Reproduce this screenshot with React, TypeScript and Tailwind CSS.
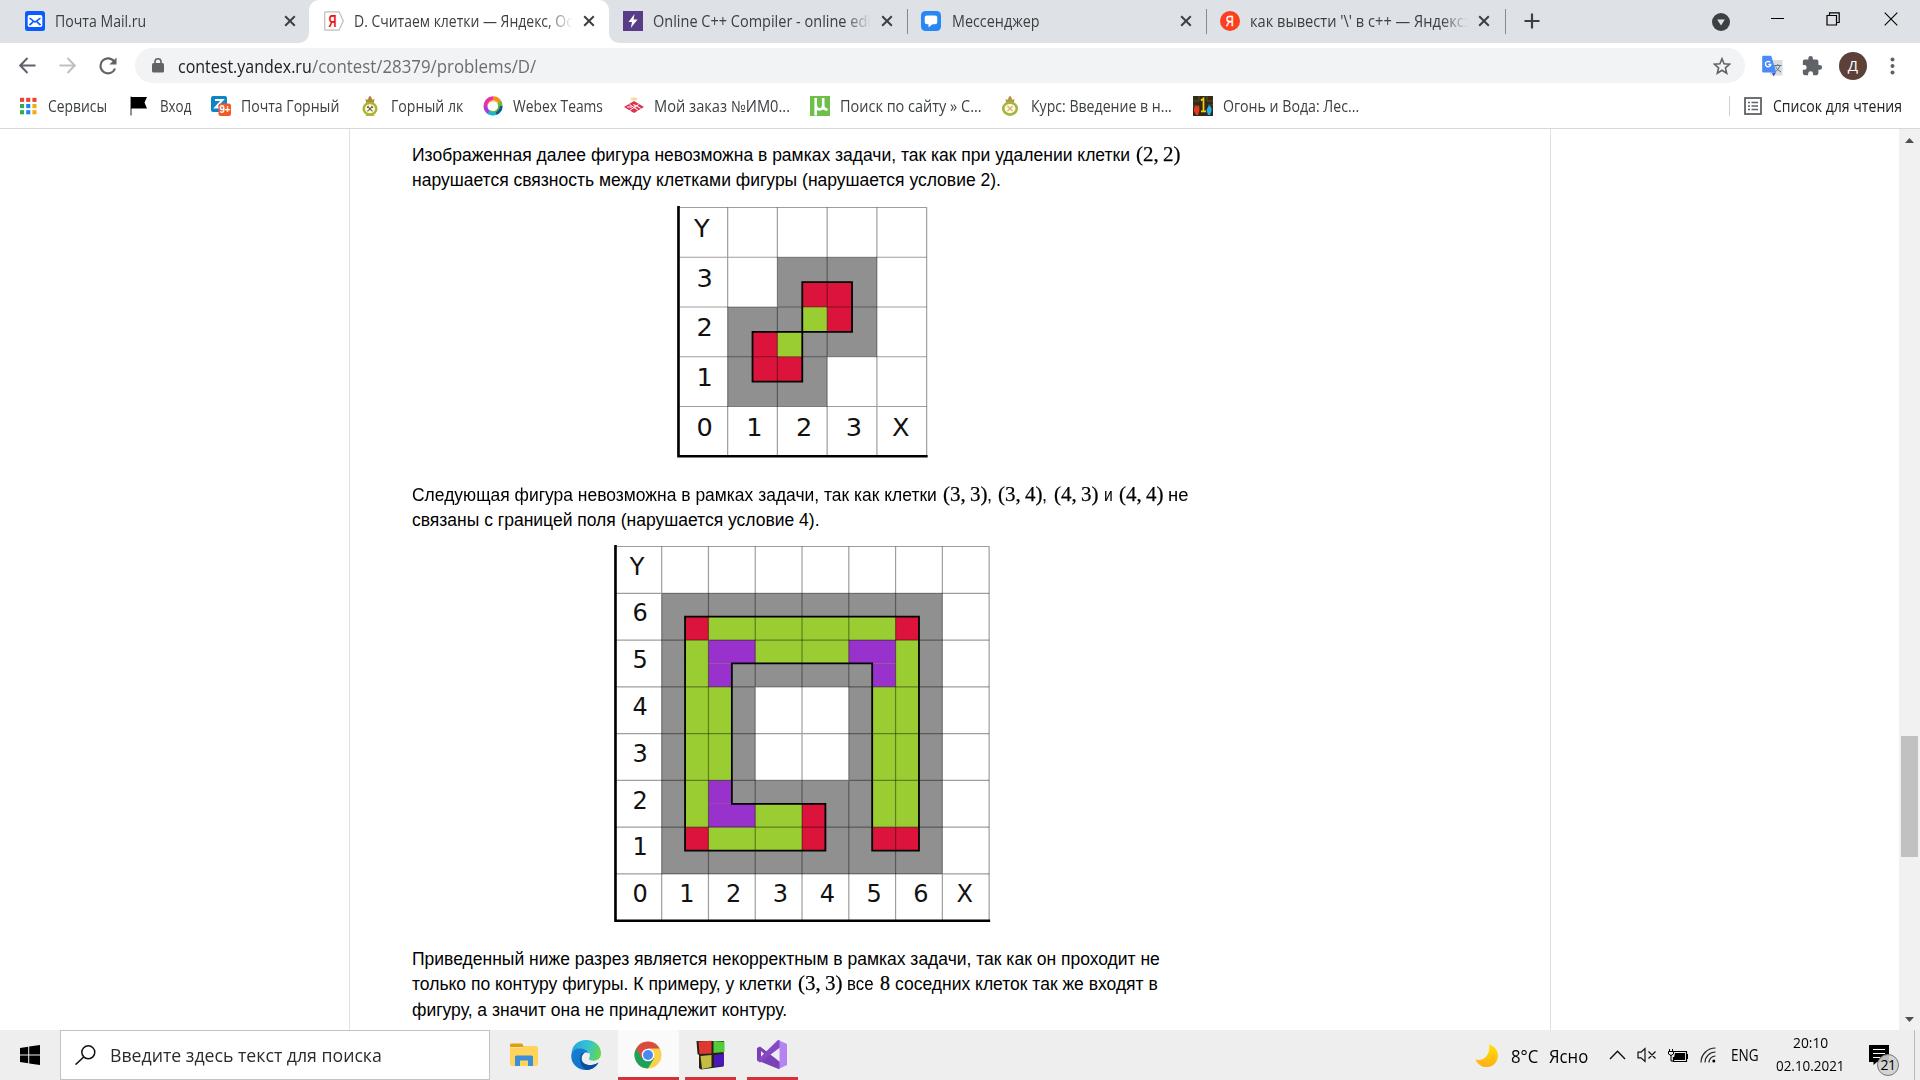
import { useLayoutEffect, useRef, useState, type ReactNode } from "react";

/** Single-line text condensed or widened to an exact width. */
function Fit({ w, className = "", children }: { w: number; className?: string; children: ReactNode }) {
  const ref = useRef<HTMLSpanElement>(null);
  const [scale, setScale] = useState(1);
  useLayoutEffect(() => {
    if (ref.current) setScale(w / ref.current.offsetWidth);
  }, [w]);
  return (
    <span className={`inline-block shrink-0 whitespace-nowrap ${className}`} style={{ width: w }}>
      <span ref={ref} className="inline-block origin-left whitespace-nowrap" style={{ transform: `scaleX(${scale})` }}>
        {children}
      </span>
    </span>
  );
}

function CloseX() {
  return (
    <svg className="h-[12px] w-[12px] shrink-0" viewBox="0 0 12 12" stroke="#3c4043" strokeWidth="2" fill="none">
      <path d="M1.2 1.2 10.8 10.8M10.8 1.2 1.2 10.8" />
    </svg>
  );
}

const MailIcon = () => (
  <svg className="h-5 w-5 shrink-0" viewBox="0 0 20 20">
    <rect width="20" height="20" rx="2.5" fill="#0a5cff" />
    <rect x="2.7" y="4" width="14.6" height="12" rx="1.8" fill="#fff" />
    <path d="M4.5 14.2 8 10.8M15.5 14.2 12 10.8M4.5 7.2C7 8 8 10.9 10 10.9S13 8 15.5 7.2" stroke="#0a5cff" strokeWidth="1.7" fill="none" />
  </svg>
);
const YaTabIcon = () => (
  <svg className="h-5 w-5 shrink-0" viewBox="0 0 20 20">
    <path d="M1.5.8H15L19.3 10 15 19.2H1.5Q.7 19.2.7 18.4V1.6Q.7.8 1.5.8Z" fill="#fff" stroke="#bdbdbd" strokeWidth="1.2" />
    <text x="4.6" y="15.6" fontFamily="Liberation Sans" fontWeight="bold" fontSize="16" textLength="8" lengthAdjust="spacingAndGlyphs" fill="#e11">Я</text>
  </svg>
);
const BoltIcon = () => (
  <svg className="h-5 w-5 shrink-0" viewBox="0 0 20 20">
    <rect width="20" height="20" fill="#583c87" />
    <path d="M11.5 3 5.5 11H9L7.8 17 14.6 8.6H10.6Z" fill="#fff" />
  </svg>
);
const ChatIcon = () => (
  <svg className="h-5 w-5 shrink-0" viewBox="0 0 20 20">
    <rect width="20" height="20" rx="4.5" fill="#2787f5" />
    <path d="M6 4.5H14Q16.3 4.5 16.3 6.8V11Q16.3 13.3 14 13.3H11.5L7.5 16.5V13.3H6Q3.7 13.3 3.7 11V6.8Q3.7 4.5 6 4.5Z" fill="#fff" />
  </svg>
);
const YaRoundIcon = () => (
  <svg className="h-5 w-5 shrink-0" viewBox="0 0 20 20">
    <circle cx="10" cy="10" r="10" fill="#fc3f1d" />
    <text x="5.8" y="15.4" fontFamily="Liberation Sans" fontSize="15" textLength="8" lengthAdjust="spacingAndGlyphs" fill="#fff" stroke="#fff" strokeWidth=".4">Я</text>
  </svg>
);

const FADE = "[mask-image:linear-gradient(to_right,#000_88%,transparent)]";

function TabStrip() {
  return (
    <div className="flex h-[43px] shrink-0 items-center bg-[#dee1e6] text-[15.5px] leading-[22px] text-[#3c4043]">
      <div className="flex h-full w-[309px] shrink-0 items-center bg-white">
        <div className="flex h-full w-full items-center rounded-br-[10px] bg-[#dee1e6] pb-px pl-[25px]">
          <MailIcon />
          <Fit w={91} className="ml-[10px]">Почта Mail.ru</Fit>
          <div className="ml-[138px]"><CloseX /></div>
        </div>
      </div>
      <div className="h-full w-[300px] shrink-0 bg-[#dee1e6]">
        <div className="flex h-full items-center rounded-t-[10px] bg-white pb-px pl-[15px]">
          <YaTabIcon />
          <div className={`ml-[10px] w-[219px] ${FADE}`}><Fit w={219}>D. Считаем клетки — Яндекс, Ос</Fit></div>
          <div className="ml-[10px]"><CloseX /></div>
        </div>
      </div>
      <div className="h-full w-[298px] shrink-0 bg-white">
        <div className="flex h-full items-center rounded-bl-[10px] bg-[#dee1e6] pb-px pl-[14px]">
          <BoltIcon />
          <div className={`ml-[10px] w-[218px] ${FADE}`}><Fit w={218}>Online C++ Compiler - online edi</Fit></div>
          <div className="ml-[10px]"><CloseX /></div>
        </div>
      </div>
      <div className="h-[25px] w-px bg-[#85888c]" />
      <div className="flex w-[298px] shrink-0 items-center pb-px pl-[13px]">
        <ChatIcon />
        <Fit w={88} className="ml-[11px]">Мессенджер</Fit>
        <div className="ml-[140px]"><CloseX /></div>
      </div>
      <div className="h-[25px] w-px bg-[#85888c]" />
      <div className="flex w-[298px] shrink-0 items-center pb-px pl-[13px]">
        <YaRoundIcon />
        <div className={`ml-[10px] w-[218px] ${FADE}`}><Fit w={218}>как вывести '\' в c++ — Яндекс:</Fit></div>
        <div className="ml-[10px]"><CloseX /></div>
      </div>
      <div className="h-[25px] w-px bg-[#85888c]" />
      <svg className="mb-px ml-[18px] h-4 w-4 shrink-0" viewBox="0 0 16 16" stroke="#3c4043" strokeWidth="2.2"><path d="M8 .5V15.5M.5 8H15.5" /></svg>
      <svg className="ml-[172px] h-[18px] w-[18px] shrink-0" viewBox="0 0 18 18"><circle cx="9" cy="9" r="9" fill="#3c4043" /><path d="M5.2 6.5H12.8L9 12.5Z" fill="#dee1e6" /></svg>
      <div className="mb-[7px] ml-[41px] h-[1px] w-[13px] shrink-0 bg-black" />
      <svg className="mb-[6px] ml-[42px] h-[14px] w-[14px] shrink-0" viewBox="0 0 14 14" fill="none" stroke="#000" strokeWidth="1.2"><path d="M1 3.5H10.5V13H1ZM3.5 3.5V.8H13.2V10.5H10.5" /></svg>
      <svg className="mb-[6px] ml-[44px] h-[14px] w-[14px] shrink-0" viewBox="0 0 14 14" stroke="#000" strokeWidth="1.1"><path d="M.7.7 13.3 13.3M13.3.7.7 13.3" /></svg>
    </div>
  );
}

function Toolbar() {
  return (
    <div className="flex h-[45px] shrink-0 items-center bg-white text-[#5f6368]">
      <svg className="ml-[19px] h-[17px] w-[17px] shrink-0" viewBox="0 0 17 17" fill="none" stroke="#5f6368" strokeWidth="2"><path d="M16.5 8.5H1.5M8.5 1 1.2 8.5 8.5 16" /></svg>
      <svg className="ml-[23px] h-[17px] w-[17px] shrink-0" viewBox="0 0 17 17" fill="none" stroke="#bdc1c6" strokeWidth="2"><path d="M.5 8.5H15.5M8.5 1 15.8 8.5 8.5 16" /></svg>
      <svg className="ml-[23px] h-[18px] w-[18px] shrink-0" viewBox="0 0 18 18" fill="none" stroke="#5f6368" strokeWidth="2.1"><path d="M15.3 4.8A7.5 7.5 0 1 0 16 11.5" /><path d="M17.5.5V7.6H10.4Z" fill="#5f6368" stroke="none" /></svg>
      <div className="ml-[18px] flex h-[35px] w-[1610px] shrink-0 items-center rounded-full bg-[#f1f3f4] text-[18.5px] leading-[26px]">
        <svg className="ml-[17px] h-[15px] w-[12px] shrink-0" viewBox="0 0 12 15"><rect y="5" width="12" height="9.6" rx="1.5" fill="#5f6368" /><path d="M3 6V3.8A3 3 0 0 1 9 3.8V6" fill="none" stroke="#5f6368" strokeWidth="1.6" /></svg>
        <Fit w={134} className="ml-[14px] text-[#202124]">contest.yandex.ru</Fit>
        <Fit w={224} className="text-[#6a6e73]">/contest/28379/problems/D/</Fit>
        <svg className="ml-[1177px] h-[18px] w-[18px] shrink-0" viewBox="0 0 20 20" fill="none" stroke="#5f6368" strokeWidth="1.8"><path d="M10 2 12.3 7.6 18.4 8.1 13.8 12.1 15.2 18 10 14.8 4.8 18 6.2 12.1 1.6 8.1 7.7 7.6Z" /></svg>
      </div>
      <svg className="ml-[17px] h-[22px] w-[21px] shrink-0" viewBox="0 0 21 22">
        <rect x="8" y="5" width="12.5" height="15.5" rx="1" fill="#dcdcdc" />
        <path d="M12 10.5H19.5M15.7 9V10.5M18 10.5Q17 14.5 13 17M13.5 11.5Q15 15 19 17" stroke="#607988" fill="none" />
        <path d="M10 17.5H14L11.5 21.5Z" fill="#3a52c4" />
        <path d="M1.2.7H9.2L14.3 17.5H1.2Q.2 17.5.2 16.5V1.7Q.2.7 1.2.7Z" fill="#4a8af4" />
        <path d="M8.2 7.3A2.7 2.7 0 1 0 8.8 9.4H6.3" fill="none" stroke="#fff" strokeWidth="1.4" />
      </svg>
      <svg className="ml-[18px] h-[22px] w-[22px] shrink-0" viewBox="0 0 24 24" fill="#5f6368"><path d="M20.5 11H19V7a2 2 0 0 0-2-2h-4V3.5a2.5 2.5 0 0 0-5 0V5H4a2 2 0 0 0-2 2v3.8h1.5a2.7 2.7 0 0 1 0 5.4H2V20a2 2 0 0 0 2 2h3.8v-1.5a2.7 2.7 0 0 1 5.4 0V22H17a2 2 0 0 0 2-2v-4h1.5a2.5 2.5 0 0 0 0-5z" /></svg>
      <div className="ml-[16px] flex h-7 w-7 shrink-0 items-center justify-center rounded-full bg-[#5d4037] text-[15px] leading-none text-white">Д</div>
      <svg className="ml-[23px] h-[18px] w-[5px] shrink-0" viewBox="0 0 5 18" fill="#5f6368"><circle cx="2.5" cy="2.5" r="2" /><circle cx="2.5" cy="9" r="2" /><circle cx="2.5" cy="15.5" r="2" /></svg>
    </div>
  );
}

const APP_DOTS = ["#ea4335", "#ea4335", "#ea4335", "#34a853", "#1a85f0", "#fbab05", "#34a853", "#1a85f0", "#fbab05"];
const AppsIcon = () => (
  <svg className="h-5 w-5" viewBox="0 0 20 20">
    {APP_DOTS.map((c, i) => <rect key={i} x={2 + (i % 3) * 6.2} y={1.8 + Math.floor(i / 3) * 6.2} width="4.1" height="4.1" fill={c} />)}
  </svg>
);
const FlagIcon = () => (
  <svg className="h-5 w-5" viewBox="0 0 20 20"><path d="M1 .5V19.5" stroke="#222" /><path d="M1 1H17L14.5 6.5 17 12.5H1Z" fill="#000" /></svg>
);
const ZimbraIcon = () => (
  <svg className="h-5 w-5" viewBox="0 0 20 20">
    <rect width="16" height="16" rx="2" fill="#0d86c8" />
    <path d="M4 4H11.5L4.5 11.5H12" fill="none" stroke="#fff" strokeWidth="2" />
    <rect x="7.5" y="7.5" width="12.5" height="12.5" rx="2" fill="#f1592a" />
    <text x="8.5" y="17" fontSize="10" fontWeight="bold" fontFamily="Liberation Sans" fill="#fff" textLength="11" lengthAdjust="spacingAndGlyphs">9+</text>
  </svg>
);
const CrestIcon = () => (
  <svg className="h-5 w-5" viewBox="0 0 20 20">
    <path d="M4.500 3 6.500 3.800 8 1.500H10L11.500 3.800 13.500 3 12.800 7H5.200Z" fill="#b28a3f" />
    <circle cx="9" cy="1.500" r="1.300" fill="#a87b38" />
    <ellipse cx="9" cy="12.800" rx="6.300" ry="5.800" fill="#fbf9e6" stroke="#a9b62c" strokeWidth="2.500" />
    <path d="M5 19Q9 20.500 13 19" stroke="#c4ae3a" strokeWidth="1.600" fill="none" />
    <path d="M6.800 10.600 11.600 15.400M11.200 10.600 6.400 15.400M6 11.600 7.600 10M12 11.600 10.400 10" stroke="#6d6540" strokeWidth="1.100" />
  </svg>
);
const GoldCrestIcon = () => (
  <svg className="h-5 w-5" viewBox="0 0 20 20">
    <path d="M4.500 3 6.500 3.800 8 1.500H10L11.500 3.800 13.500 3 12.800 7H5.200Z" fill="#b9954a" />
    <circle cx="9" cy="1.500" r="1.300" fill="#b08a40" />
    <ellipse cx="9" cy="12.600" rx="6.800" ry="6" fill="#fffbe2" stroke="#a3b542" strokeWidth="2.600" />
    <path d="M6.400 10 11.600 15.200M11.600 10 6.400 15.200" stroke="#d5b25f" strokeWidth="1.200" />
  </svg>
);
const WebexIcon = () => (
  <svg className="h-5 w-5" viewBox="0 0 20 20" fill="none" strokeWidth="4">
    <path d="M10 2.300A7.600 7.600 0 0 0 2.500 10" stroke="#ed2ea5" />
    <path d="M2.500 10A7.600 7.600 0 0 0 7 16.900" stroke="#a63ddc" />
    <path d="M5.500 16.200A7.600 7.600 0 0 0 15 15.700" stroke="#12b5e0" />
    <path d="M10 2.300A7.600 7.600 0 0 1 16.800 6.400" stroke="#f58f1c" />
    <path d="M16.600 6A7.600 7.600 0 0 1 17.600 10" stroke="#68bb38" />
    <path d="M17.600 10A7.600 7.600 0 0 1 13 17" stroke="#14548e" />
    <path d="M5 8A5.500 5.500 0 0 1 15 8" stroke="#f7ba35" strokeWidth="1" />
    <path d="M15.500 8A5.800 5.800 0 0 1 7 15" stroke="#55ba45" strokeWidth="1.600" />
  </svg>
);
const DiamondIcon = () => (
  <svg className="h-5 w-5" viewBox="0 0 20 20">
    <path d="M10 .5 11 2 13.500 1.500 12.500 4.500H7.500L6.500 1.500 9 2Z" fill="#f1dca4" />
    <path d="M10 5 20 11 10 17 0 11Z" fill="#dc3450" />
    <path d="M5.500 8.500 14.500 14.500M14.500 8.500 5.500 14.500M3.200 11H8M12 9.500 16.800 12.500" stroke="#fff" strokeWidth="1" />
    <path d="M9 8 14 9.500 11 12Z" fill="#fbdce0" />
  </svg>
);
const MuIcon = () => (
  <svg className="h-5 w-5" viewBox="0 0 20 20">
    <rect width="20" height="20" fill="#6cc04a" />
    <path d="M5.700 2V19.600M5.700 8Q5.700 13.400 9.400 13.400 13.200 13.400 13.200 9V2M13.200 9Q13.200 13.600 17.500 13.600" stroke="#fff" strokeWidth="2.600" fill="none" />
  </svg>
);
const GameIcon = () => (
  <svg className="h-5 w-5" viewBox="0 0 20 20">
    <rect width="20" height="20" fill="#332b17" />
    <path d="M0 5H6V0M14 0V5H20M0 10H5M15 9H20" stroke="#5c4c26" fill="none" />
    <path d="M8 4.500 10.500 2.500V15M8 15.300H13" stroke="#f5d10c" strokeWidth="1.700" fill="none" />
    <path d="M1 12 3 9 4 11 6 9 6.500 14 5 19H3L1 15Z" fill="#e8391b" />
    <path d="M16 9 18.500 12V15L17 19H15L13.500 14Z" fill="#1fb4ec" />
  </svg>
);

const BOOKMARKS = [
  { box: "w-[112px]", icon: <AppsIcon />, label: "Сервисы", w: 59 },
  { box: "w-[81px]", icon: <FlagIcon />, label: "Вход", w: 31 },
  { box: "w-[150px]", icon: <ZimbraIcon />, label: "Почта Горный", w: 98 },
  { box: "w-[122px]", icon: <CrestIcon />, label: "Горный лк", w: 72 },
  { box: "w-[141px]", icon: <WebexIcon />, label: "Webex Teams", w: 90 },
  { box: "w-[186px]", icon: <DiamondIcon />, label: "Мой заказ №ИМ0...", w: 136 },
  { box: "w-[191px]", icon: <MuIcon />, label: "Поиск по сайту » С...", w: 142 },
  { box: "w-[192px]", icon: <GoldCrestIcon />, label: "Курс: Введение в н...", w: 141 },
  { box: "w-[200px]", icon: <GameIcon />, label: "Огонь и Вода: Лес...", w: 136 },
];

function Bookmarks() {
  return (
    <div className="flex h-[41px] shrink-0 items-center border-b border-[#d5d7da] bg-white pb-[4px] pl-[18px] text-[15.5px] leading-[22px] text-[#3c4043]">
      {BOOKMARKS.map((b) => (
        <div key={b.label} className={`flex shrink-0 items-center gap-[9.5px] ${b.box}`}>
          <div className="h-5 w-5 shrink-0">{b.icon}</div>
          <Fit w={b.w}>{b.label}</Fit>
        </div>
      ))}
      <div className="ml-auto flex items-center pr-[18px]">
        <div className="h-5 w-px bg-[#cfd1d4]" />
        <svg className="ml-[14px] h-[18px] w-[18px]" viewBox="0 0 18 18" fill="none" stroke="#5f6368" strokeWidth="1.8">
          <rect x="1" y="1" width="16" height="16" />
          <path d="M4 5.500H6M7.500 5.500H14M4 9H6M7.500 9H14M4 12.500H6M7.500 12.500H14" strokeWidth="1.500" />
        </svg>
        <Fit w={129} className="ml-[11px] text-[#202124]">Список для чтения</Fit>
      </div>
    </div>
  );
}

type Box = [number, number, number, number, string];
const GREY = "#909090", RED = "#dc143c", GREEN = "#9acd32", PURPLE = "#9932cc";

/** Coordinate board: blocks and outlines are given in cell units from the top-left corner. */
function Board({ n, cell, width, font, lift, blocks, outlines, className }: {
  n: number; cell: number; width: number; font: number; lift: number; blocks: Box[]; outlines: string[]; className: string;
}) {
  const o = 0.9;
  const top = 2.5;
  const at = (v: number) => v * cell;
  const path = (s: string) => s.split(" ").map((p, i) => {
    const [x, y] = p.split(",").map(Number);
    return `${i ? "L" : "M"}${o + at(x)} ${top + at(y)}`;
  }).join("") + "Z";
  const lines = Array.from({ length: n + 1 }, (_, i) => i);
  const end = at(n);
  const side = cell * 0.54;
  const base = cell * 0.61 - lift;
  return (
    <svg className={`shrink-0 ${className}`} viewBox={`0 0 ${width} ${width}`} fontFamily="DejaVu Sans" fontSize={font} textAnchor="middle" fill="#111">
      {blocks.map(([x, y, w, h, c], i) => <rect key={i} x={o + at(x)} y={top + at(y)} width={at(w)} height={at(h)} fill={c} />)}
      {lines.map((i) => (
        <path key={i} d={`M${o + at(i)} ${top}V${top + end}M${o} ${top + at(i)}H${o + end}`} stroke="#000" strokeOpacity=".38" strokeWidth="1.2" />
      ))}
      {outlines.map((s) => <path key={s} d={path(s)} fill="none" stroke="#000" strokeWidth="1.8" />)}
      <path d={`M1.500 1V${top + end}H${o + end + 1}`} fill="none" stroke="#000" strokeWidth="2.6" />
      <text x={o + side - 3} y={top + base}>Y</text>
      {Array.from({ length: n - 1 }, (_, i) => (
        <text key={i} x={o + side} y={top + at(i + 1) + base}>{n - 2 - i}</text>
      ))}
      {Array.from({ length: n - 2 }, (_, i) => (
        <text key={i} x={o + at(i + 1) + side} y={top + at(n - 1) + base}>{i + 1}</text>
      ))}
      <text x={o + at(n - 1) + side - 3} y={top + at(n - 1) + base}>X</text>
    </svg>
  );
}

const FIRST: Box[] = [
  [2, 1, 2, 2, GREY], [1, 2, 2, 2, GREY],
  [2.5, 1.5, 1, 1, RED], [2.5, 2, 0.5, 0.5, GREEN],
  [1.5, 2.5, 1, 1, RED], [2, 2.5, 0.5, 0.5, GREEN],
];
const SECOND: Box[] = [
  [1, 1, 6, 6, GREY], [3, 3, 2, 2, "#fff"],
  [1.5, 1.5, 5, 1, GREEN], [1.5, 1.5, 1, 5, GREEN], [5.5, 1.5, 1, 5, GREEN], [2, 5.5, 2, 1, GREEN],
  [1.5, 1.5, 0.5, 0.5, RED], [6, 1.5, 0.5, 0.5, RED], [1.5, 6, 0.5, 0.5, RED], [4, 5.5, 0.5, 1, RED], [5.5, 6, 1, 0.5, RED],
  [2, 2, 1, 0.5, PURPLE], [2, 2.5, 0.5, 0.5, PURPLE], [5, 2, 1, 0.5, PURPLE], [5.5, 2.5, 0.5, 0.5, PURPLE],
  [2, 5, 0.5, 0.5, PURPLE], [2, 5.5, 1, 0.5, PURPLE],
];

const Tex = ({ w, className = "", children }: { w: number; className?: string; children: ReactNode }) => (
  <Fit w={w} className={`font-['Liberation_Serif'] text-[20px] leading-[20px] [-webkit-text-stroke:0.25px_#000] ${className}`}>{children}</Fit>
);
const Pair = ({ a, b, w, className = "" }: { a: number; b: number; w: number; className?: string }) => (
  <Tex w={w} className={className}>({a},{"\u2009"}{b})</Tex>
);
const Line = ({ children }: { children: ReactNode }) => <div className="flex h-[25.3px] items-baseline leading-[25px]">{children}</div>;

function Problem() {
  return (
    <div className="flex min-h-0 flex-1 bg-white">
      <div className="w-[349px] shrink-0" />
      <div className="flex w-[1202px] shrink-0 flex-col border-x border-[#e0e0e0] pl-[62px] pt-[14px] font-['Liberation_Sans'] text-[17.5px] text-black">
        <Line><Fit w={718}>Изображенная далее фигура невозможна в рамках задачи, так как при удалении клетки</Fit><Pair a={2} b={2} w={44} className="ml-[6px]" /></Line>
        <Line><Fit w={589}>нарушается связность между клетками фигуры (нарушается условие 2).</Fit></Line>
        <Board n={5} cell={49.75} width={254} font={25.6} lift={1} blocks={FIRST} outlines={["2.5,1.5 3.5,1.5 3.5,2.5 2.5,2.5", "1.5,2.5 2.5,2.5 2.5,3.5 1.5,3.5"]} className="ml-[265px] mt-[11px] h-[254px] w-[254px]" />
        <div className="h-[24px] shrink-0" />
        <Line>
          <Fit w={525}>Следующая фигура невозможна в рамках задачи, так как клетки</Fit>
          <Pair a={3} b={3} w={44} className="ml-[6px]" /><span>,</span>
          <Pair a={3} b={4} w={44} className="ml-[6px]" /><span>,</span>
          <Pair a={4} b={3} w={44} className="ml-[7px]" />
          <Fit w={9} className="ml-[6px]">и</Fit>
          <Pair a={4} b={4} w={44} className="ml-[6px]" />
          <Fit w={20} className="ml-[5px]">не</Fit>
        </Line>
        <Line><Fit w={408}>связаны с границей поля (нарушается условие 4).</Fit></Line>
        <Board n={8} cell={46.78} width={379} font={24} lift={0.4} blocks={SECOND} outlines={["1.5,1.5 6.5,1.5 6.5,6.5 5.5,6.5 5.5,2.5 2.5,2.5 2.5,5.5 4.5,5.5 4.5,6.5 1.5,6.5"]} className="ml-[202px] mt-[11px] h-[379px] w-[379px]" />
        <div className="h-[24px] shrink-0" />
        <Line><Fit w={748}>Приведенный ниже разрез является некорректным в рамках задачи, так как он проходит не</Fit></Line>
        <Line>
          <Fit w={380}>только по контуру фигуры. К примеру, у клетки</Fit>
          <Pair a={3} b={3} w={44} className="ml-[6px]" />
          <Fit w={27} className="ml-[5px]">все</Fit>
          <Tex w={10} className="ml-[6px]">8</Tex>
          <Fit w={263} className="ml-[5px]">соседних клеток так же входят в</Fit>
        </Line>
        <Line><Fit w={375}>фигуру, а значит она не принадлежит контуру.</Fit></Line>
      </div>
      <div className="ml-auto flex w-[21px] flex-col items-center bg-[#f1f1f1]">
        <svg className="mt-[9px] h-[5px] w-[9px] shrink-0" viewBox="0 0 9 5"><path d="M0 5 4.500 0 9 5Z" fill="#505050" /></svg>
        <div className="mt-[593px] h-[121px] w-[17px] shrink-0 bg-[#c1c1c1]" />
        <svg className="mb-[8px] mt-auto h-[5px] w-[9px] shrink-0" viewBox="0 0 9 5"><path d="M0 0 4.500 5 9 0Z" fill="#505050" /></svg>
      </div>
    </div>
  );
}

const FolderIcon = () => (
  <svg className="h-[24px] w-[28px]" viewBox="0 0 28 24">
    <path d="M0 2Q0 .5 1.500.5H12L14 4H0Z" fill="#e09c12" />
    <path d="M0 4.500H12L14 3H26Q28 3 28 5V21Q28 23 26 23H2Q0 23 0 21Z" fill="#ffd35c" />
    <path d="M5 23V14Q5 12.500 6.500 12.500H21.500Q23 12.500 23 14V23H18V17.500H10V23Z" fill="#3a8fd8" />
  </svg>
);
const EdgeIcon = () => (
  <svg className="h-[30px] w-[30px]" viewBox="0 0 30 30">
    <defs>
      <linearGradient id="edgeTop" x1="0" x2="1" y1=".2" y2=".4"><stop stopColor="#2aa4dc" /><stop offset=".55" stopColor="#35c2d4" /><stop offset="1" stopColor="#64d650" /></linearGradient>
      <linearGradient id="edgeLow" x1="0" x2="1" y1="0" y2="1"><stop stopColor="#1682cf" /><stop offset="1" stopColor="#0a6cc9" /></linearGradient>
    </defs>
    <path d="M.5 13C1.200 5 7.500 0 15 0 24 0 30 6 30 13.200 30 18 26.500 20.700 22.500 20.700 19.500 20.700 17.500 19.500 17.800 18.500 19.300 17 19.500 13.500 17 11.200 12 7 3 8 .5 13Z" fill="url(#edgeTop)" />
    <path d="M.3 15C1 9.500 6.500 7.800 11 8.500 15 9.200 17 11 18 13.500 14.500 10.800 10.500 14 10.500 18.500 10.500 24.500 19 27.500 27.500 22.500 24.500 28 20 30 15 30 6.500 30-.5 23.500.3 15Z" fill="url(#edgeLow)" />
    <path d="M11 13C6.500 19 11 29 16 29.900 20.500 29.800 25 27 27.500 22.500 19 27.500 10.500 24.500 10.500 18.500 10.500 16 11.500 14.500 13 13Z" fill="#0d4f9c" />
  </svg>
);
const ChromeIcon = () => (
  <svg className="h-[28px] w-[28px]" viewBox="0 0 28 28">
    <circle cx="14" cy="14" r="13.500" fill="#fbd04a" />
    <path d="M14 14 2.300 7.250A13.500 13.500 0 0 0 14 27.500L20 17.500Z" fill="#1da15a" />
    <path d="M14 14 7.800 17.500 2.300 7.250A13.500 13.500 0 0 1 25.700 7.500H14Z" fill="#db4c40" />
    <circle cx="14" cy="14" r="6.300" fill="#fff" /><circle cx="14" cy="14" r="5" fill="#4a8af4" />
  </svg>
);
const BlocksIcon = () => (
  <svg className="h-[30px] w-[29px]" viewBox="0 0 29 30">
    <path d="M.5 1 28 1 27.500 26.500 5 29.500 3 28 3 15 1.500 14Z" fill="#262018" />
    <path d="M2.500 1.500 15.500.8V13.500L3.500 14Z" fill="#df3830" /><path d="M17.500 1 28.500 1.800V12L17.500 13Z" fill="#52cc38" />
    <path d="M4.500 16 15.500 15V27L6 29Z" fill="#c4bd42" /><path d="M18 15 28 14V25.500L18 27Z" fill="#4a18b8" />
  </svg>
);
const VsIcon = () => (
  <svg className="h-[29px] w-[30px]" viewBox="0 0 30 29">
    <path d="M0 8 3 6.500 23 22V28.500L21.500 29 3 21.500 0 20.500Z M4 11V18L8 14.500Z" fillRule="evenodd" fill="#7b3fb8" />
    <path d="M3 22.500 0 20.500 21 0 23 .5V7.500Z" fill="#8748c8" />
    <path d="M21 0 30 4V25L21.500 29Q22.500 28.500 22.500 27V2Q22.500.5 21 0Z" fill="#b583f2" />
  </svg>
);

function Taskbar() {
  return (
    <div className="relative flex h-[50px] shrink-0 items-stretch bg-[#eeeeee] text-black">
      <div className="flex w-[60px] shrink-0 items-center pl-5">
        <svg className="h-5 w-5" viewBox="0 0 20 20"><path d="M0 3 8.200 1.800V9.500H0ZM9.200 1.600 20 0V9.500H9.200ZM0 10.500H8.200V18.200L0 17ZM9.200 10.500H20V20L9.200 18.400Z" /></svg>
      </div>
      <div className="flex w-[430px] shrink-0 items-center border border-[#c3c3c3] bg-white pl-[14px] text-[19px] text-[#2b2b2b]">
        <svg className="mb-px h-[20px] w-[21px] shrink-0" viewBox="0 0 21 20" fill="none" stroke="#111" strokeWidth="1.500"><circle cx="13.300" cy="7.300" r="6.500" /><path d="M8.700 12 .6 19.600" /></svg>
        <Fit w={272} className="ml-[14px]">Введите здесь текст для поиска</Fit>
      </div>
      <div className="flex w-[66px] shrink-0 items-center pl-[20px]"><FolderIcon /></div>
      <div className="flex w-[62px] shrink-0 items-center pl-[15px]"><EdgeIcon /></div>
      <div className="flex w-[61px] shrink-0 items-center border-b-[3px] border-[#d13438] bg-[#fafafa] pl-[16px] pt-[2px]"><ChromeIcon /></div>
      <div className="ml-[6px] flex w-[51px] shrink-0 items-center border-b-[3px] border-[#d13438] pl-[11px] pt-[2px]"><BlocksIcon /></div>
      <div className="ml-[11px] flex w-[51px] shrink-0 items-center border-b-[3px] border-[#d13438] pl-[10px] pt-[2px]"><VsIcon /></div>
      <div className="ml-auto flex items-center">
        <svg className="h-[23px] w-[23px] shrink-0" viewBox="0 0 23 23">
          <defs><linearGradient id="moon" x1="0" x2="0" y1="0" y2="1"><stop stopColor="#ffe100" /><stop offset="1" stopColor="#ffae18" /></linearGradient></defs>
          <path d="M14 .5A11.500 11.500 0 1 1 .5 15.500C9 18 16 10 14 .5Z" fill="url(#moon)" />
        </svg>
        <Fit w={27} className="ml-[13px] mt-[3px] text-[18px]">8°C</Fit>
        <Fit w={39} className="ml-[11px] mt-[3px] text-[18px]">Ясно</Fit>
        <svg className="ml-[21px] h-[10px] w-[17px] shrink-0" viewBox="0 0 17 10" fill="none" stroke="#111" strokeWidth="1.400"><path d="M1 9 8.500 1.200 16 9" /></svg>
        <svg className="ml-[11px] h-[16px] w-[20px] shrink-0" viewBox="0 0 20 16" fill="none" stroke="#111" strokeWidth="1.200"><path d="M1 5.200H4L8 1.500V14.500L4 10.800H1ZM11.500 4.500 18.500 11.500M18.500 4.500 11.500 11.500" /></svg>
        <svg className="ml-[11px] h-[15px] w-[20px] shrink-0" viewBox="0 0 20 15"><path d="M5.500 3.500H18.500V13.500H5.500V9M18.500 6.500H19.500V10.500H18.500" fill="none" stroke="#000" strokeWidth="1.200" /><path d="M7 5H17V12H5.500Z" /><path d="M1.500 1V3M4.500 1V3M.5 3.500H5.500V6L3 7.500.5 6ZM3 7V13H5.500" fill="none" stroke="#000" /></svg>
        <svg className="ml-[12px] h-[16px] w-[16px] shrink-0" viewBox="0 0 16 16" fill="none" stroke="#222" strokeWidth="1.200"><path d="M1 15.500A14.500 14.500 0 0 1 15.500 1M5 15.500A10.500 10.500 0 0 1 15.500 5M9 15.500A6.500 6.500 0 0 1 15.500 9" /><circle cx="13.800" cy="14" r="1.500" fill="#000" stroke="none" /></svg>
        <Fit w={28} className="ml-[15px] text-[16px]">ENG</Fit>
        <div className="mb-[3px] ml-[17px] flex w-[69px] flex-col items-center gap-[2px] text-[15px] leading-[21px]"><Fit w={35}>20:10</Fit><Fit w={69}>02.10.2021</Fit></div>
        <div className="relative ml-[24px] h-[20px] w-[21px]">
          <svg className="h-[20px] w-[21px]" viewBox="0 0 21 20"><path d="M0 0H20V17H8L4.500 20V17H0Z" /><path d="M4 4.500H16M4 8.500H16M4 12.500H11" stroke="#fff" strokeWidth="1.200" /></svg>
          <div className="absolute left-[8px] top-[9px] flex h-[22px] w-[22px] items-center justify-center rounded-full border border-[#777] bg-[#cfcfcf]/90 text-[14px] leading-none tracking-[-0.5px]">21</div>
        </div>
        <div className="ml-[24px] h-[50px] w-px bg-[#b9b9b9]" />
        <div className="w-[5px]" />
      </div>
    </div>
  );
}

export default function App() {
  return (
    <div className="flex h-[1080px] w-[1920px] flex-col overflow-hidden bg-white font-['Open_Sans','Noto_Sans',sans-serif]">
      <TabStrip />
      <Toolbar />
      <Bookmarks />
      <Problem />
      <Taskbar />
    </div>
  );
}
